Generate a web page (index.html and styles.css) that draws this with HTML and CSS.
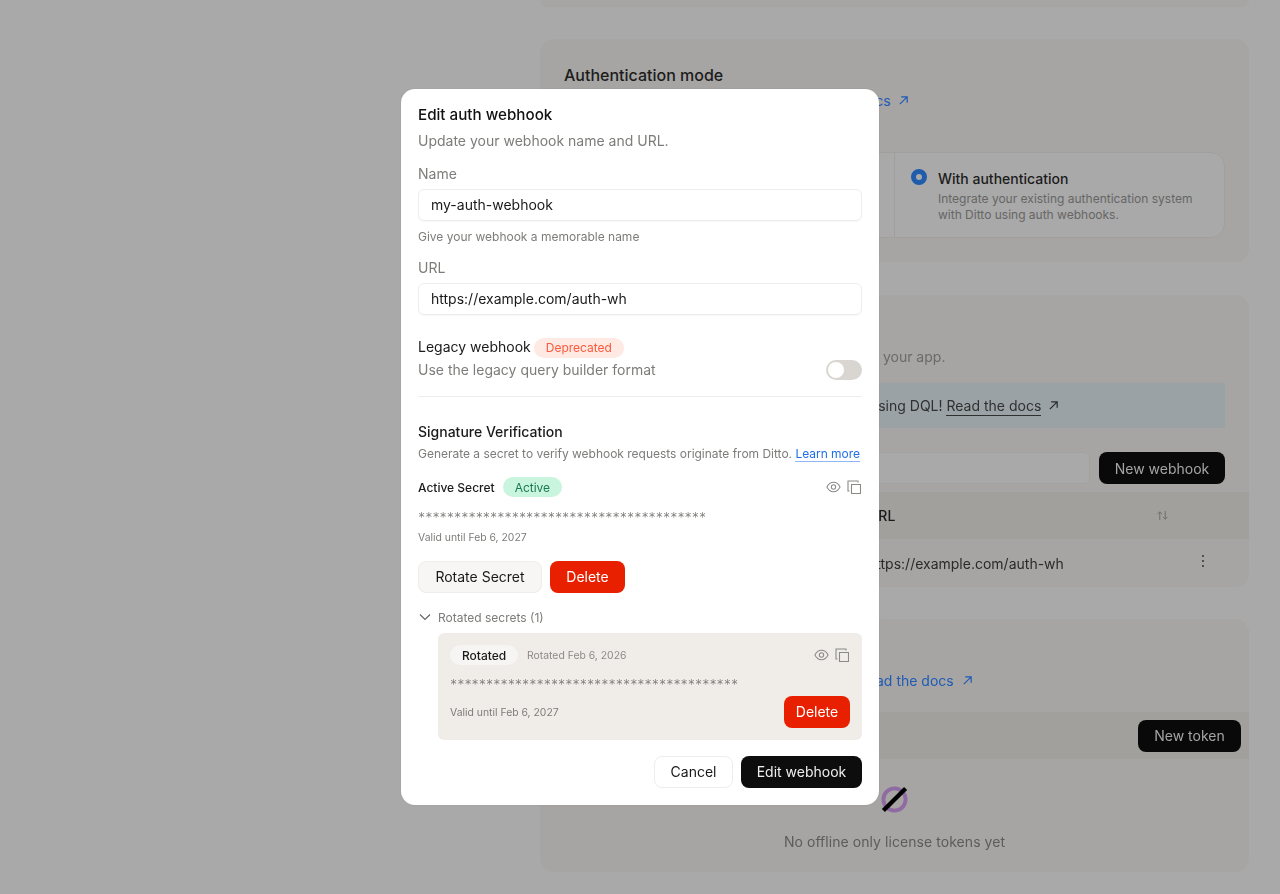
FILE: index.html
```html
<!DOCTYPE html>
<html lang="en">
<head>
<meta charset="utf-8">
<title>Edit auth webhook</title>
<link rel="stylesheet" href="styles.css">
</head>
<body>
<main class="page">
  <section class="card card-stub"></section>

  <section class="card card-auth">
    <h2 class="card-title">Authentication mode</h2>
    <p class="card-desc auth-desc">Choose how apps connect to Ditto. <a class="link" href="#">Read the docs <svg class="arrow" viewBox="0 0 12 12"><path d="M2 10 10 2M3.5 2H10V8.5"/></svg></a></p>
    <div class="radio-group">
      <div class="radio-option"></div>
      <div class="radio-option radio-selected">
        <span class="radio-dot"></span>
        <div>
          <div class="radio-title">With authentication</div>
          <div class="radio-desc">Integrate your existing authentication system with Ditto using auth webhooks.</div>
        </div>
      </div>
    </div>
  </section>

  <section class="card card-hooks">
    <h2 class="card-title">Auth webhooks</h2>
    <p class="card-desc hooks-desc">Webhooks verify the identity of users who join your app.</p>
    <div class="alert">New webhooks can now be written using DQL! <a class="alert-link" href="#">Read the docs</a> <svg class="arrow arrow-dark" viewBox="0 0 12 12"><path d="M2 10 10 2M3.5 2H10V8.5"/></svg></div>
    <div class="toolbar">
      <div class="search"></div>
      <button class="btn btn-dark btn-new">New webhook</button>
    </div>
    <div class="table-head">
      <span>Name</span>
      <span>URL</span>
      <svg class="sort" viewBox="0 0 14 12"><path d="M4 11V2M1.5 4.5 4 2l2.500 2.500M10 1v9M7.500 7.500 10 10l2.500-2.500"/></svg>
    </div>
    <div class="table-row">
      <span>my-auth-webhook</span>
      <span>https://example.com/auth-wh</span>
      <svg class="dots" viewBox="0 0 4 14"><circle cx="2" cy="2" r="1"/><circle cx="2" cy="7" r="1"/><circle cx="2" cy="12" r="1"/></svg>
    </div>
  </section>

  <section class="card card-tokens">
    <h2 class="card-title">Offline only license tokens</h2>
    <p class="card-desc tokens-desc">Tokens let peers sync without a connection. <a class="link" href="#">Read the docs <svg class="arrow" viewBox="0 0 12 12"><path d="M2 10 10 2M3.5 2H10V8.5"/></svg></a></p>
    <div class="tokens-head"><button class="btn btn-dark btn-token">New token</button></div>
    <div class="empty">
      <svg class="empty-icon" viewBox="0 0 28 28"><circle cx="14" cy="14" r="11.500"/><path d="M2.500 25.500 25.500 2.500"/></svg>
      <p class="empty-text">No offline only license tokens yet</p>
    </div>
  </section>
</main>

<div class="backdrop"></div>

<div class="dialog" role="dialog">
  <h1 class="dialog-title">Edit auth webhook</h1>
  <p class="dialog-sub">Update your webhook name and URL.</p>

  <label class="field-label label-name">Name</label>
  <div class="input">my-auth-webhook</div>
  <p class="hint">Give your webhook a memorable name</p>

  <label class="field-label label-url">URL</label>
  <div class="input">https://example.com/auth-wh</div>

  <div class="legacy">
    <div class="legacy-text">
      <div class="legacy-title">Legacy webhook <span class="badge badge-red">Deprecated</span></div>
      <div class="legacy-desc">Use the legacy query builder format</div>
    </div>
    <span class="toggle"><span class="toggle-knob"></span></span>
  </div>
  <hr class="divider">

  <h2 class="sig-title">Signature Verification</h2>
  <p class="sig-desc">Generate a secret to verify webhook requests originate from Ditto. <a class="learn" href="#">Learn more</a></p>

  <div class="secret-head">
    <span class="secret-label">Active Secret</span>
    <span class="badge badge-green">Active</span>
    <span class="icons">
      <svg class="icon-eye" viewBox="0 0 16 12"><path d="M1 6C2.600 2.800 5 1 8 1s5.400 1.800 7 5c-1.600 3.200-4 5-7 5S2.600 9.200 1 6Z"/><circle cx="8" cy="6" r="2.300"/></svg>
      <svg class="icon-copy" viewBox="0 0 14 14"><path d="M4.500 4.500h9v9h-9zM2.500 11H1V1h10v1.500"/></svg>
    </span>
  </div>
  <div class="stars">****************************************</div>
  <p class="valid">Valid until Feb 6, 2027</p>
  <div class="secret-actions">
    <button class="btn btn-light">Rotate Secret</button>
    <button class="btn btn-red">Delete</button>
  </div>

  <div class="rotated-toggle">
    <svg class="chevron" viewBox="0 0 12 8"><path d="M1 1.500 6 6.500l5-5"/></svg>
    <span>Rotated secrets (1)</span>
  </div>
  <div class="rotated-card">
    <div class="rotated-head">
      <span class="pill">Rotated</span>
      <span class="rotated-date">Rotated Feb 6, 2026</span>
      <span class="icons">
        <svg class="icon-eye" viewBox="0 0 16 12"><path d="M1 6C2.600 2.800 5 1 8 1s5.400 1.800 7 5c-1.600 3.200-4 5-7 5S2.600 9.200 1 6Z"/><circle cx="8" cy="6" r="2.300"/></svg>
        <svg class="icon-copy" viewBox="0 0 14 14"><path d="M4.500 4.500h9v9h-9zM2.500 11H1V1h10v1.500"/></svg>
      </span>
    </div>
    <div class="stars stars-rotated">****************************************</div>
    <div class="rotated-foot">
      <span class="rotated-valid">Valid until Feb 6, 2027</span>
      <button class="btn btn-red btn-red-small">Delete</button>
    </div>
  </div>

  <div class="dialog-actions">
    <button class="btn btn-white">Cancel</button>
    <button class="btn btn-dark btn-edit">Edit webhook</button>
  </div>
</div>
</body>
</html>
```
FILE: styles.css
```css
* { box-sizing: border-box; }
html, body { margin: 0; height: 100%; overflow: hidden; }
body {
  background: #a9a9a9;
  font-family: Inter, "Liberation Sans", sans-serif;
  font-size: 14px;
  color: #111;
}
h1, h2, p { margin: 0; font-weight: 500; }
p { font-weight: 400; }
a { text-decoration: none; }
button { font: inherit; cursor: pointer; }

/* page behind the dialog */
.page {
  height: 894px;
  padding-left: 540px;
  display: flex;
  flex-direction: column;
  filter: blur(0.4px);
}
.card {
  width: 709px;
  flex: none;
  background: #a6a5a3;
  border-radius: 14px;
  overflow: hidden;
}
.card-stub { height: 7px; border-radius: 0 0 14px 14px; }
.card-auth { height: 223px; margin-top: 32px; padding: 25px 24px 0; }
.card-hooks { height: 292px; margin-top: 33px; }
.card-tokens { height: 253px; margin-top: 32px; }

.card-title { font-size: 16px; line-height: 22px; font-weight: 500; color: #1c1c1c; }
.card-hooks .card-title, .card-tokens .card-title { padding: 15px 24px 0; }
.card-desc { font-size: 14px; line-height: 20px; margin-top: 5px; color: #6a6a68; white-space: nowrap; }
.auth-desc { letter-spacing: -.09px; }
.hooks-desc { padding: 0 32px; margin-top: 15px; }
.tokens-desc { padding: 0 24px; margin-top: 15px; }
.link { color: #1f5bb5; }
.arrow { width: 11px; height: 11px; margin-left: 4px; fill: none; stroke: #1f5bb5; stroke-width: 1.300; vertical-align: 0; }
.arrow-dark { stroke: #2a2a2a; margin-left: 3px; }

.radio-group {
  display: flex;
  height: 86px;
  width: 661px;
  margin-top: 41px;
  background: #a9a9a9;
  border: 1px solid #a09f9c;
  border-radius: 14px;
  overflow: hidden;
}
.radio-option { width: 329px; flex: none; }
.radio-selected {
  width: 330px;
  border-left: 1px solid #a09f9c;
  padding: 16px 16px;
  display: flex;
  gap: 11px;
}
.radio-dot {
  width: 16px;
  height: 16px;
  flex: none;
  border-radius: 50%;
  border: 5px solid #1f5cab;
  background: #a9a9a9;
}
.radio-title { font-size: 14px; line-height: 20px; font-weight: 500; color: #1c1c1c; }
.radio-desc { font-size: 12px; line-height: 16px; color: #666665; margin-top: 2px; }

.alert {
  height: 45px;
  width: 661px;
  margin: 16px 0 0 24px;
  background: #9aa2a6;
  font-size: 14px;
  line-height: 45px;
  color: #303030;
  padding-left: 70px;
  white-space: nowrap;
}
.alert-link { color: #303030; border-bottom: 1px solid #303030; padding-bottom: 1px; }
.toolbar { display: flex; gap: 9px; margin: 24px 24px 0; height: 32px; }
.search { flex: 1; background: #a9a9a9; border: 1px solid #a3a2a0; border-radius: 6px; }
.btn { display: inline-flex; align-items: center; justify-content: center; height: 32px; border-radius: 8px; padding: 0 16px; font-size: 14px; border: 1px solid transparent; white-space: nowrap; }
.btn-dark { background: #0e0d0d; color: #eee; }
.btn-new { width: 126px; background: #0a0909; color: #a5a5a5; }
.table-head, .table-row {
  display: grid;
  grid-template-columns: 328px 1fr 20px;
  align-items: center;
  padding: 0 28px 0 0;
  font-size: 14px;
}
.table-head { height: 47px; margin-top: 8px; background: #a1a09c; font-weight: 500; color: #1a1a1a; }
.table-row { height: 48px; color: #2a2a2a; }
.table-head span, .table-row span { white-space: nowrap; }
.table-head span:first-child, .table-row span:first-child { padding-left: 24px; }
.sort { width: 13px; height: 11px; margin-left: -45px; fill: none; stroke: #6b6b69; stroke-width: 1; }
.dots { width: 4px; height: 14px; margin-top: -4px; fill: #333; }

.tokens-head {
  height: 47px;
  margin-top: 21px;
  background: #a1a09c;
  display: flex;
  align-items: center;
  justify-content: flex-end;
  padding-right: 8px;
}
.btn-token { width: 103px; background: #0a0909; color: #a5a5a5; }
.empty { display: flex; flex-direction: column; align-items: center; padding-top: 27px; }
.empty-icon { width: 27px; height: 27px; fill: none; flex: none; }
.empty-icon circle { stroke: #8f6aa3; stroke-width: 4; }
.empty-icon path { stroke: #000; stroke-width: 4.500; }
.empty-text { margin-top: 19px; font-size: 14px; line-height: 20px; color: #5c5c5a; letter-spacing: .06px; }

/* overlay */
.backdrop { position: fixed; inset: 0; }
.dialog {
  position: fixed;
  left: 401px;
  top: 89px;
  width: 478px;
  height: 716px;
  background: #fff;
  border-radius: 14px;
  padding: 15px 17px 0;
  display: flex;
  flex-direction: column;
  box-shadow: 0 0 2px rgba(0,0,0,.1);
  filter: blur(0.4px);
}
.dialog .btn { padding-bottom: 2px; }
.dialog-title { font-size: 15.2px; line-height: 22px; font-weight: 500; color: #111; }
.dialog-sub { font-size: 14px; line-height: 20px; margin-top: 5px; color: #7c7c7a; }
.field-label { display: block; font-size: 14px; line-height: 20px; color: #7c7c7a; }
.label-name { margin-top: 13px; }
.label-url { margin-top: 13px; }
.input {
  height: 32px;
  margin-top: 5px;
  border: 1px solid #eeedeb;
  border-radius: 6px;
  padding: 0 12px;
  line-height: 30.500px;
  font-size: 14px;
  color: #1a1a1a;
  box-shadow: 0 1px 1px rgba(0,0,0,.03);
}
.hint { font-size: 12px; line-height: 16px; margin-top: 8px; color: #7c7c7a; }
.legacy { display: flex; justify-content: space-between; align-items: flex-end; margin-top: 21px; }
.legacy-title { display: flex; align-items: center; gap: 3px; font-size: 14px; line-height: 20px; color: #1a1a1a; font-weight: 400; }
.legacy-desc { font-size: 14px; line-height: 20px; margin-top: 2px; color: #7c7c7a; }
.badge { display: inline-flex; align-items: center; height: 20px; border-radius: 10px; padding: 0 12px; font-size: 12px; font-weight: 400; }
.badge-red { background: #ffe9e3; color: #fb5a3c; margin-top: 2px; }
.badge-green { background: #c9f5de; color: #1a7a50; }
.toggle { width: 36px; height: 20px; border-radius: 10px; background: #d9d5d0; padding: 2px; display: block; }
.toggle-knob { display: block; width: 16px; height: 16px; border-radius: 50%; background: #fff; }
.divider { width: 100%; height: 1px; margin: 16px 0 0; border: 0; background: #eeedeb; flex: none; }
.sig-title { font-size: 14px; line-height: 20px; font-weight: 500; margin-top: 25px; color: #1a1a1a; }
.sig-desc { font-size: 12px; line-height: 16px; margin-top: 4px; color: #7c7c7a; white-space: nowrap; letter-spacing: -.015px; }
.learn { color: #1f6feb; border-bottom: 1px solid #8db8f5; }
.secret-head { display: flex; align-items: center; gap: 8px; margin-top: 15px; height: 20px; }
.secret-label { font-size: 12px; font-weight: 500; color: #1a1a1a; }
.icons { margin-left: auto; display: flex; align-items: center; gap: 6px; padding-right: 1px; }
.icon-eye { width: 15px; height: 12px; fill: none; stroke: #8a8a88; stroke-width: 1.100; }
.icon-copy { width: 14px; height: 14px; fill: none; stroke: #8a8a88; stroke-width: 1.100; }
.stars { font-family: "DejaVu Sans Mono", monospace; font-size: 11.97px; line-height: 16px; color: #7c7c7a; margin-top: 12px; }
.valid { font-size: 10.4px; line-height: 14px; margin-top: 6px; color: #7c7c7a; }
.secret-actions { display: flex; gap: 8px; margin-top: 16px; }
.btn-light { width: 124px; background: #f7f6f4; border-color: #eeedeb; color: #1a1a1a; }
.btn-red { width: 75px; background: #e82000; color: #fff; }
.rotated-toggle { display: flex; align-items: center; gap: 6px; margin-top: 16px; height: 16px; font-size: 12px; color: #7c7c7a; }
.chevron { width: 14px; height: 8px; fill: none; stroke: #666; stroke-width: 1.200; }
.rotated-card {
  margin: 8px 0 0 20px;
  height: 107px;
  background: #f0ede8;
  border-radius: 6px;
  padding: 12px;
  display: flex;
  flex-direction: column;
}
.rotated-head { display: flex; align-items: center; gap: 9px; height: 20px; }
.pill { display: inline-flex; align-items: center; justify-content: center; width: 68px; height: 20px; border-radius: 10px; background: #f6f5f3; font-size: 12px; font-weight: 500; color: #1a1a1a; }
.rotated-date { font-size: 10.4px; color: #8a8a88; }
.stars-rotated { margin-top: 11px; }
.rotated-foot { display: flex; justify-content: space-between; align-items: center; margin-top: 4px; }
.rotated-valid { font-size: 10.4px; color: #7c7c7a; }
.btn-red-small { width: 66px; }
.dialog-actions { display: flex; justify-content: flex-end; gap: 8px; margin-top: 16px; }
.btn-white { width: 79px; background: #fff; border-color: #eeedeb; color: #1a1a1a; }
.btn-edit { width: 121px; }
```
